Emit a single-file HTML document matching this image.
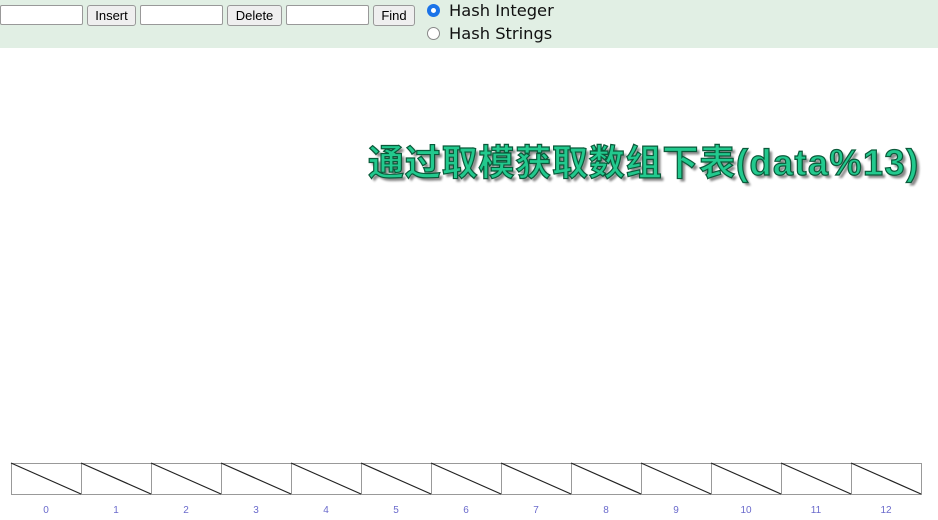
<!DOCTYPE html>
<html><head><meta charset="utf-8"><style>
body{margin:0;width:938px;height:520px;background:#fff;position:relative;overflow:hidden;font-family:"Liberation Sans",sans-serif}
.bar{position:absolute;left:0;top:0;width:938px;height:48px;background:#e1efe4}
input[type=text]{position:absolute;top:5px;height:20px;width:83px;box-sizing:border-box;border:1px solid #999;border-radius:2px;background:#fff;margin:0;padding:0}
button{position:absolute;top:5px;height:21px;box-sizing:border-box;border:1px solid #999;border-radius:3px;background:#efefef;font:13px "Liberation Sans",sans-serif;padding:0 6px;margin:0}
.r{position:absolute;left:427px;font:16.3px "DejaVu Sans",sans-serif;color:#111}
.dot{position:absolute;left:0;top:3px;width:13px;height:13px;border-radius:50%;border:1px solid #888;background:#fff;box-sizing:border-box}
.title{position:absolute;left:368px;top:138px;font-weight:bold;font-size:36px;color:#22c98e;-webkit-text-stroke:1.2px #0a5a3a;text-shadow:3px 3px 2px #888;white-space:nowrap;line-height:44px}
.cjk{font-family:"Noto Sans CJK SC",sans-serif;letter-spacing:0.8px}
.lat{font-family:"Liberation Sans",sans-serif;letter-spacing:1.5px}
</style></head><body>
<div class="bar"></div>
<input type="text" style="left:0">
<button style="left:87px;width:49px">Insert</button>
<input type="text" style="left:140px">
<button style="left:227px;width:55px">Delete</button>
<input type="text" style="left:286px">
<button style="left:373px;width:42px">Find</button>
<div class="r" style="top:1px"><span class="dot" style="border:4px solid #1a73e8;background:#fff"></span><span style="margin-left:22px">Hash Integer</span></div>
<div class="r" style="top:24px"><span class="dot"></span><span style="margin-left:22px">Hash Strings</span></div>
<div class="title"><span class="cjk">通过取模获取数组下表</span><span class="lat">(data%13)</span></div>
<svg style="position:absolute;left:0;top:0" width="938" height="520">
<g stroke="#999" fill="none"><rect x="11.5" y="463.5" width="910" height="31"/></g>
<g stroke="#999">
<line x1="81.5" y1="463" x2="81.5" y2="495"/><line x1="151.5" y1="463" x2="151.5" y2="495"/><line x1="221.5" y1="463" x2="221.5" y2="495"/><line x1="291.5" y1="463" x2="291.5" y2="495"/><line x1="361.5" y1="463" x2="361.5" y2="495"/><line x1="431.5" y1="463" x2="431.5" y2="495"/><line x1="501.5" y1="463" x2="501.5" y2="495"/><line x1="571.5" y1="463" x2="571.5" y2="495"/><line x1="641.5" y1="463" x2="641.5" y2="495"/><line x1="711.5" y1="463" x2="711.5" y2="495"/><line x1="781.5" y1="463" x2="781.5" y2="495"/><line x1="851.5" y1="463" x2="851.5" y2="495"/>
</g>
<g stroke="#222" stroke-width="1.2">
<line x1="11" y1="463" x2="81" y2="494"/><line x1="81" y1="463" x2="151" y2="494"/><line x1="151" y1="463" x2="221" y2="494"/><line x1="221" y1="463" x2="291" y2="494"/><line x1="291" y1="463" x2="361" y2="494"/><line x1="361" y1="463" x2="431" y2="494"/><line x1="431" y1="463" x2="501" y2="494"/><line x1="501" y1="463" x2="571" y2="494"/><line x1="571" y1="463" x2="641" y2="494"/><line x1="641" y1="463" x2="711" y2="494"/><line x1="711" y1="463" x2="781" y2="494"/><line x1="781" y1="463" x2="851" y2="494"/><line x1="851" y1="463" x2="921" y2="494"/>
</g>
<g fill="#6a6acc" font-family="Liberation Sans" font-size="10" text-anchor="middle">
<text x="46" y="513">0</text><text x="116" y="513">1</text><text x="186" y="513">2</text><text x="256" y="513">3</text><text x="326" y="513">4</text><text x="396" y="513">5</text><text x="466" y="513">6</text><text x="536" y="513">7</text><text x="606" y="513">8</text><text x="676" y="513">9</text><text x="746" y="513">10</text><text x="816" y="513">11</text><text x="886" y="513">12</text>
</g>
</svg>
</body></html>
